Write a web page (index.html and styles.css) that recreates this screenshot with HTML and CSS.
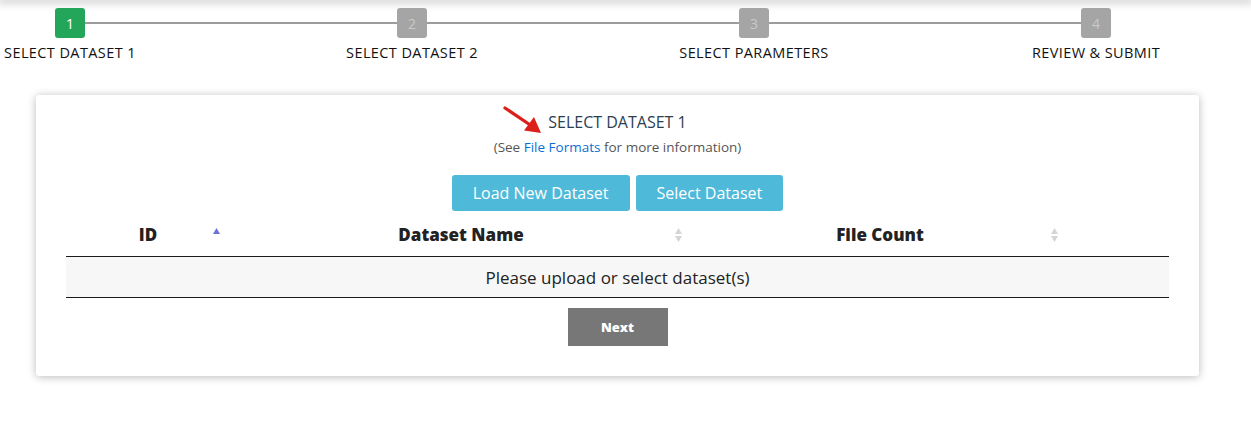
FILE: index.html
```html
<!DOCTYPE html>
<html>
<head>
<meta charset="utf-8">
<link rel="stylesheet" href="styles.css">
</head>
<body>
<div class="topshade"></div>
<div class="stepper">
  <div class="track">
    <div class="num active">1</div>
    <div class="bar"></div>
    <div class="num">2</div>
    <div class="bar"></div>
    <div class="num">3</div>
    <div class="bar"></div>
    <div class="num">4</div>
  </div>
  <div class="labels">
    <div class="label">SELECT DATASET 1</div>
    <div class="label">SELECT DATASET 2</div>
    <div class="label">SELECT PARAMETERS</div>
    <div class="label">REVIEW &amp; SUBMIT</div>
  </div>
</div>
<div class="card">
  <div class="title"><span class="title-text"><svg class="arrow" width="42" height="30" viewBox="0 0 42 30"><path d="M2 2 L28 19.5" stroke="#dc1f1a" stroke-width="3.2" stroke-linecap="round"/><polygon points="38,27 21,24.5 31,11" fill="#dc1f1a"/></svg>SELECT DATASET 1</span></div>
  <div class="subtitle">(See <a class="link" href="#">File Formats</a> for more information)</div>
  <div class="actions">
    <button class="btn">Load New Dataset</button>
    <button class="btn">Select Dataset</button>
  </div>
  <div class="table">
    <div class="thead">
      <div class="th c1">ID<svg class="sort" width="7" height="6" viewBox="0 0 7 6"><polygon points="3.5,0 7,6 0,6" fill="#6b74d6"/></svg></div>
      <div class="th c2">Dataset Name<svg class="sort" width="7" height="14" viewBox="0 0 7 14"><polygon points="3.5,0 7,6 0,6" fill="#d5d5d5"/><polygon points="0,8 7,8 3.5,14" fill="#d5d5d5"/></svg></div>
      <div class="th c3">File Count<svg class="sort" width="7" height="14" viewBox="0 0 7 14"><polygon points="3.5,0 7,6 0,6" fill="#d5d5d5"/><polygon points="0,8 7,8 3.5,14" fill="#d5d5d5"/></svg></div>
      <div class="th c4"></div>
    </div>
    <div class="empty">Please upload or select dataset(s)</div>
  </div>
  <div class="footer">
    <button class="next">Next</button>
  </div>
</div>
</body>
</html>
```
FILE: styles.css
```css
html, body {
  margin: 0;
  padding: 0;
  background: #fff;
  font-family: "Open Sans", "Liberation Sans", sans-serif;
  color: #222;
}
body {
  min-height: 427px;
  padding-bottom: 40px;
  box-sizing: border-box;
}
.topshade {
  height: 0;
  box-shadow: 0 0 9px 3px rgba(0,0,0,0.22);
}
.stepper {
  width: 1166px;
  padding-top: 8px;
}
.track {
  display: flex;
  align-items: center;
  padding: 0 55px;
}
.num {
  width: 30px;
  height: 30px;
  border-radius: 3px;
  background: #a5a5a5;
  color: #c9c9c9;
  font-size: 14px;
  display: flex;
  align-items: center;
  justify-content: center;
}
.num.active {
  background: #24a65a;
  color: #fff;
}
.bar {
  flex: 1;
  height: 2px;
  background: #9c9c9c;
}
.labels {
  display: flex;
  justify-content: space-between;
  margin-top: 6px;
}
.label {
  width: 140px;
  display: flex;
  justify-content: center;
  font-size: 14.5px;
  line-height: 18px;
  color: #111;
  white-space: nowrap;
  letter-spacing: 0.4px;
}
.card {
  margin: 33px 0 0 36px;
  width: 1163px;
  background: #fff;
  border-radius: 3px;
  box-shadow: 0 1px 8px rgba(0,0,0,0.28);
  padding: 17px 30px 30px;
  box-sizing: border-box;
}
.title {
  text-align: center;
  font-size: 16px;
  line-height: 20px;
  color: #2c3e50;
}
.title-text {
  position: relative;
}
.arrow {
  position: absolute;
  left: -45px;
  top: -5px;
}
.subtitle {
  text-align: center;
  font-size: 13.5px;
  line-height: 18px;
  color: #555;
  margin-top: 6px;
}
.link {
  color: #0b6fd3;
  text-decoration: none;
}
.actions {
  display: flex;
  justify-content: center;
  gap: 6px;
  margin-top: 19px;
}
.btn {
  height: 36px;
  padding: 0 21px;
  border: none;
  border-radius: 3px;
  background: #4fb9d9;
  color: #fff;
  font-family: inherit;
  font-size: 16px;
  font-weight: 500;
}
.table {
  margin-top: 4px;
}
.thead {
  display: grid;
  grid-template-columns: 164px 462px 376px 101px;
  height: 41px;
  border-bottom: 1px solid #1a1a1a;
}
.th {
  position: relative;
  display: flex;
  align-items: center;
  justify-content: center;
  font-size: 17px;
  font-weight: 800;
  color: #222;
  padding-bottom: 3px;
  box-sizing: border-box;
}
.sort {
  position: absolute;
  right: 10px;
  top: 13px;
}
.empty {
  height: 40px;
  display: flex;
  align-items: center;
  justify-content: center;
  background: #f7f7f7;
  border-bottom: 1px solid #1a1a1a;
  font-size: 17px;
  color: #222;
}
.footer {
  display: flex;
  justify-content: center;
  margin-top: 10px;
}
.next {
  width: 100px;
  height: 38px;
  border: none;
  background: #777;
  color: #fff;
  font-family: inherit;
  font-size: 13px;
  font-weight: 800;
}
```
